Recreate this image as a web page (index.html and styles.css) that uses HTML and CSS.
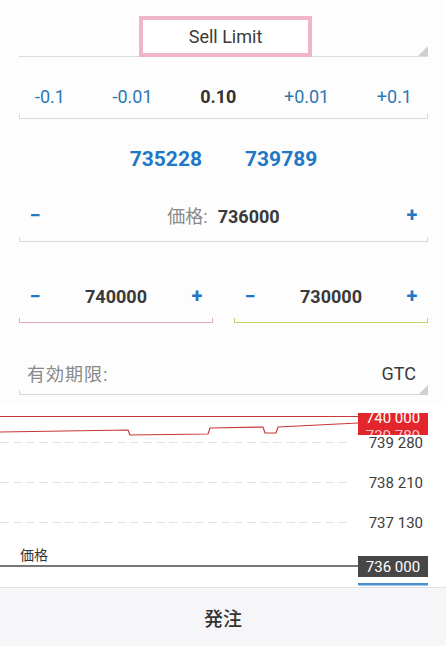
FILE: index.html
```html
<!DOCTYPE html>
<html>
<head>
    <meta charset="utf-8" />
    <title>Order</title>
    <link rel="stylesheet" href="styles.css">
</head>
<body>
    <div class="form">
        <!--order type-->
        <div class="spinner">
            <div class="type-box">Sell Limit</div>
        </div>

        <!--volume-->
        <div class="field field-lots">
            <div class="lots">
                <span class="step">-0.1</span>
                <span class="step">-0.01</span>
                <span class="lot-value">0.10</span>
                <span class="step">+0.01</span>
                <span class="step">+0.1</span>
            </div>
            <div class="line"></div>
        </div>

        <!--bid / ask-->
        <div class="quotes">
            <span>735228</span>
            <span>739789</span>
        </div>

        <!--price-->
        <div class="field field-price">
            <div class="stepper">
                <span class="btn">&minus;</span>
                <span class="value"><span class="label">価格:</span>736000</span>
                <span class="btn">+</span>
            </div>
            <div class="line"></div>
        </div>

        <!--sl / tp-->
        <div class="pair">
            <div class="field">
                <div class="stepper">
                    <span class="btn">&minus;</span>
                    <span class="value">740000</span>
                    <span class="btn">+</span>
                </div>
                <div class="line line-sl"></div>
            </div>
            <div class="field">
                <div class="stepper">
                    <span class="btn">&minus;</span>
                    <span class="value">730000</span>
                    <span class="btn">+</span>
                </div>
                <div class="line line-tp"></div>
            </div>
        </div>

        <!--expiration-->
        <div class="field expiry">
            <div class="expiry-row">
                <span class="label">有効期限:</span>
                <span class="expiry-value">GTC</span>
            </div>
            <div class="line"></div>
        </div>
    </div>

    <!--chart-->
    <div class="chart">
        <svg width="446" height="182" viewBox="0 0 446 182">
            <defs>
                <clipPath id="redClip"><rect x="358" y="8" width="70" height="22" /></clipPath>
            </defs>
            <g stroke="#e3e3e3" stroke-width="1" stroke-dasharray="9 4">
                <line x1="0" y1="37.5" x2="348" y2="37.5" />
                <line x1="0" y1="77.5" x2="348" y2="77.5" />
                <line x1="0" y1="117.5" x2="348" y2="117.5" />
            </g>
            <line x1="0" y1="11.5" x2="360" y2="11.5" stroke="#c8383a" stroke-width="1.2" />
            <polyline fill="none" stroke="#c8383a" stroke-width="1.2"
                points="0,27 128,25 130,30 208,29 210,23 263,22 265,28 276,28 278,22 358,18" />
            <g clip-path="url(#redClip)">
                <rect x="358" y="8" width="70" height="22" fill="#e2262b" />
                <text x="393" y="18" class="axis-tag" fill="#fff">740 000</text>
                <text x="393" y="36" class="axis-tag" fill="#f8caca">739 789</text>
            </g>
            <text x="423" y="42.5" class="axis">739 280</text>
            <text x="423" y="82.5" class="axis">738 210</text>
            <text x="423" y="122.5" class="axis">737 130</text>
            <line x1="0" y1="161" x2="360" y2="161" stroke="#4a4a4a" stroke-width="1.5" />
            <text x="20" y="155" class="line-name">価格</text>
            <rect x="358" y="151" width="70" height="21" fill="#474747" />
            <text x="393" y="167" class="axis-tag" fill="#fff">736 000</text>
            <rect x="358" y="178" width="70" height="2.5" fill="#4a8fd0" />
        </svg>
    </div>

    <!--submit-->
    <div class="submit">発注</div>
</body>
</html>
```

FILE: styles.css
```css
body {
    margin: 0;
    width: 446px;
    height: 646px;
    overflow: hidden;
    background: #fdfdfd;
    font-family: Roboto, "Noto Sans CJK JP", sans-serif;
    color: #333;
}

.form {
    box-sizing: border-box;
    height: 405px;
    padding: 0 18px 0 19px;
}

.spinner {
    position: relative;
    display: flex;
    justify-content: center;
    padding-top: 16px;
    height: 40px;
    border-bottom: 1px solid #dcdcdc;
}

    .spinner::after, .expiry::after {
        content: "";
        position: absolute;
        right: 0;
        bottom: 0;
        width: 0;
        height: 0;
        border-left: 10px solid transparent;
        border-bottom: 10px solid #cfcfcf;
    }

.type-box {
    box-sizing: border-box;
    width: 173px;
    height: 41px;
    margin-left: 4px;
    border: 4px solid #f1b5c9;
    background: #fff;
    display: flex;
    align-items: center;
    justify-content: center;
    font-size: 18px;
    color: #3a3a3a;
}

.field {
    position: relative;
}

.line {
    height: 4px;
    border: 1px solid #d8d8d8;
    border-top: none;
}

.line-sl {
    border-color: #e8aab6;
}

.line-tp {
    border-color: #c3d36a;
}

.field-lots {
    margin-top: 21px;
}

.lots {
    display: flex;
    justify-content: space-between;
    align-items: center;
    height: 36px;
    padding: 0 16px;
    font-size: 18px;
}

.step {
    color: #2d78b4;
}

.lot-value {
    font-weight: bold;
    color: #333;
}

.quotes {
    display: flex;
    justify-content: center;
    gap: 43px;
    height: 44px;
    align-items: center;
    margin-top: 18px;
    font-size: 21px;
    font-weight: bold;
    color: #1e78c6;
}

.field-price {
    margin-top: 12px;
}

.stepper {
    display: flex;
    align-items: center;
    justify-content: space-between;
    height: 44px;
    padding: 0 10px;
}

.btn {
    color: #1e78c6;
    font-size: 20px;
    font-weight: bold;
    width: 12px;
    text-align: center;
}

.value {
    font-size: 18px;
    font-weight: bold;
    color: #3a3a3a;
}

.label {
    font-weight: normal;
    color: #8a8a8a;
    margin-right: 10px;
}

.pair {
    display: flex;
    gap: 21px;
    margin-top: 32px;
}

    .pair .field {
        flex: 1;
    }

.expiry {
    margin-top: 33px;
}

.expiry-row {
    display: flex;
    justify-content: space-between;
    align-items: center;
    height: 34px;
    padding: 0 12px 0 8px;
    font-size: 18px;
}

    .expiry-row .label {
        color: #8a8a8a;
        letter-spacing: 1px;
    }

.expiry-value {
    color: #3a3a3a;
}

.chart {
    height: 182px;
    border-bottom: 1px solid #e2e2e2;
    background: #fff;
}

    .chart svg {
        display: block;
    }

.axis {
    font-family: Roboto, sans-serif;
    font-size: 15px;
    fill: #3c3c3c;
    text-anchor: end;
}

.axis-tag {
    font-family: Roboto, sans-serif;
    font-size: 15px;
    text-anchor: middle;
}

.line-name {
    font-family: "Noto Sans CJK JP", sans-serif;
    font-size: 14px;
    fill: #333;
}

.submit {
    height: 58px;
    display: flex;
    align-items: center;
    justify-content: center;
    background: #f6f6f8;
    font-family: "Noto Sans CJK JP", sans-serif;
    font-size: 19px;
    font-weight: 500;
    color: #333;
}
```
